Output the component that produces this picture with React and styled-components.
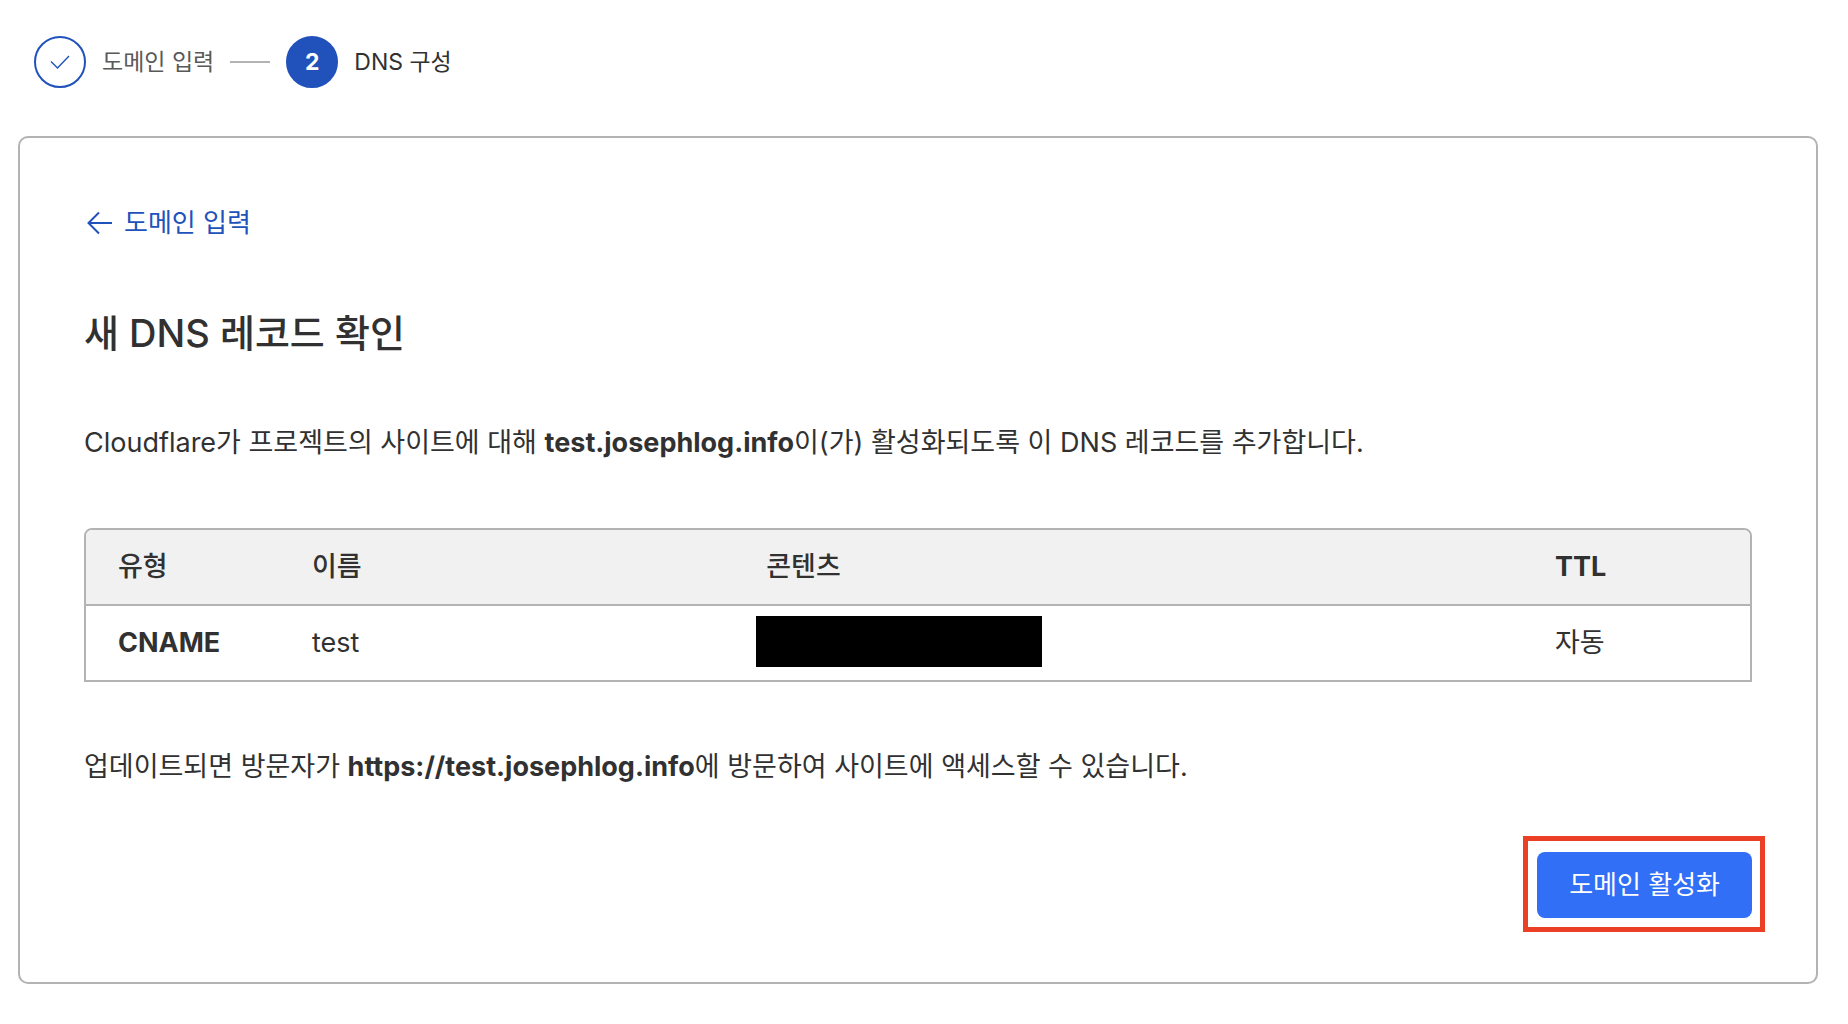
import React from "react";
import styled, { createGlobalStyle } from "styled-components";

const steps = [
  { id: 1, label: "도메인 입력", done: true },
  { id: 2, label: "DNS 구성", done: false },
];

const records = [{ type: "CNAME", name: "test", ttl: "자동" }];

export default function App() {
  return (
    <>
      <GlobalStyle />
      <PageStyled>
        <Steps>
          {steps.map((step) => (
            <Step key={step.id} $done={step.done}>
              <StepCircle $done={step.done}>
                {step.done ? <CheckIcon /> : step.id}
              </StepCircle>
              <span>{step.label}</span>
            </Step>
          ))}
        </Steps>

        <Card>
          <BackLink href="#domain">
            <ArrowIcon />
            도메인 입력
          </BackLink>
          <Title>새 DNS 레코드 확인</Title>
          <Text>
            Cloudflare가 프로젝트의 사이트에 대해{" "}
            <strong>test.josephlog.info</strong>이(가) 활성화되도록 이 DNS
            레코드를 추가합니다.
          </Text>

          <RecordTable>
            <thead>
              <tr>
                <HeadCell $width="194px">유형</HeadCell>
                <HeadCell $width="27.3%">이름</HeadCell>
                <HeadCell $width="47.4%">콘텐츠</HeadCell>
                <HeadCell>
                  <strong>TTL</strong>
                </HeadCell>
              </tr>
            </thead>
            <tbody>
              {records.map((record) => (
                <tr key={record.name}>
                  <Cell>
                    <strong>{record.type}</strong>
                  </Cell>
                  <Cell>{record.name}</Cell>
                  <Cell>
                    <Redacted />
                  </Cell>
                  <Cell>{record.ttl}</Cell>
                </tr>
              ))}
            </tbody>
          </RecordTable>

          <Text>
            업데이트되면 방문자가 <strong>https://test.josephlog.info</strong>에
            방문하여 사이트에 액세스할 수 있습니다.
          </Text>

          <Actions>
            <Button type="button">도메인 활성화</Button>
          </Actions>
        </Card>
      </PageStyled>
    </>
  );
}

function CheckIcon() {
  return (
    <svg width="20" height="16" viewBox="0 0 20 16" aria-hidden="true">
      <path
        d="M1 7.5 L7.5 14 L19 2"
        fill="none"
        stroke="currentColor"
        strokeWidth="1.4"
      />
    </svg>
  );
}

function ArrowIcon() {
  return (
    <svg width="28" height="24" viewBox="0 0 28 24" aria-hidden="true">
      <path
        d="M28 12 H5 M15 1.5 L4.5 12 L15 22.5"
        fill="none"
        stroke="currentColor"
        strokeWidth="2"
      />
    </svg>
  );
}

const GlobalStyle = createGlobalStyle`
  * {
    box-sizing: border-box;
  }
  body {
    margin: 0;
    background-color: #fff;
    color: #313131;
    font-family: Inter, "Noto Sans CJK KR", sans-serif;
    font-size: 27px;
    line-height: 42px;
  }
  strong {
    font-weight: 700;
  }
`;

const PageStyled = styled.main`
  padding: 36px 30px 40px 18px;
`;

const Steps = styled.ol`
  display: flex;
  align-items: center;
  gap: 16px;
  list-style: none;
  margin: 0 0 48px;
  padding: 0 16px;
`;

const Step = styled.li`
  display: flex;
  align-items: center;
  gap: 16px;
  font-size: 23px;
  color: ${({ $done }) => ($done ? "#595959" : "#313131")};

  &:not(:first-child)::before {
    content: "";
    width: 40px;
    height: 2px;
    background-color: #b3b3b3;
  }
`;

const StepCircle = styled.div`
  display: flex;
  align-items: center;
  justify-content: center;
  width: 52px;
  height: 52px;
  border: 2px solid #2152bb;
  border-radius: 50%;
  font-weight: 700;
  color: ${({ $done }) => ($done ? "#2152bb" : "#fff")};
  background-color: ${({ $done }) => ($done ? "#fff" : "#2152bb")};
`;

const Card = styled.section`
  border: 2px solid #b3b3b3;
  border-radius: 10px;
  padding: 64px;
`;

const BackLink = styled.a`
  display: flex;
  align-items: center;
  gap: 12px;
  width: fit-content;
  color: #2152bb;
  font-size: 26px;
  text-decoration: none;
`;

const Title = styled.h1`
  margin: 64px 0;
  font-size: 38px;
  font-weight: 500;
  line-height: 50px;
`;

const Text = styled.p`
  margin: 64px 0;
`;

const RecordTable = styled.table`
  width: 100%;
  table-layout: fixed;
  border: 2px solid #b3b3b3;
  border-radius: 8px 8px 0 0;
  border-spacing: 0;
  overflow: hidden;
`;

const HeadCell = styled.th`
  width: ${({ $width }) => $width || "auto"};
  height: 76px;
  padding: 0 32px;
  border-bottom: 2px solid #b3b3b3;
  background-color: #f1f1f1;
  text-align: left;
  font-weight: 500;
`;

const Cell = styled.td`
  position: relative;
  height: 74px;
  padding: 0 32px;
`;

// covers the record content
const Redacted = styled.div`
  position: absolute;
  top: 10px;
  left: 22px;
  width: 286px;
  height: 51px;
  background-color: #000;
`;

const Actions = styled.div`
  display: flex;
  justify-content: flex-end;
`;

const Button = styled.button`
  position: relative;
  height: 66px;
  padding: 0 32px;
  border: none;
  border-radius: 8px;
  background-color: #306ff6;
  color: #fff;
  font: inherit;
  font-size: 26px;
  cursor: pointer;

  &::after {
    content: "";
    position: absolute;
    inset: -16px -13px -14px -14px;
    border: 5px solid #eb4025;
  }
`;
